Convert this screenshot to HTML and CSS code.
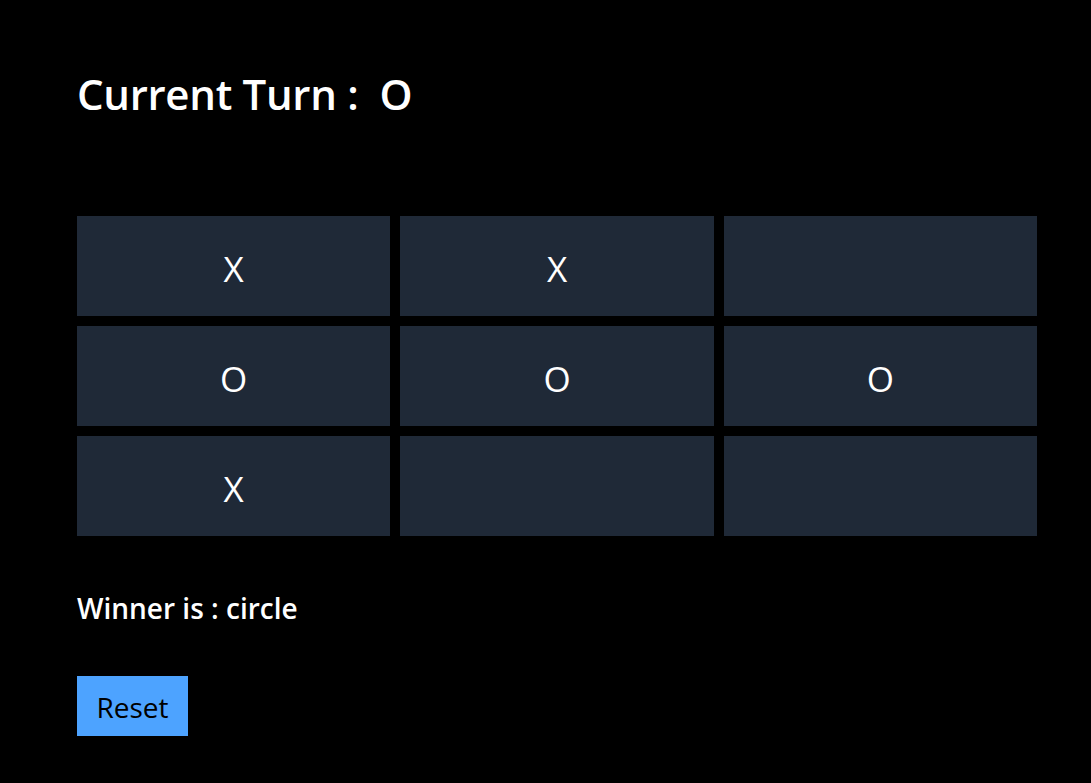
FILE: index.html
```html
<!DOCTYPE html>
<html>
<head>
<meta charset="utf-8">
<link rel="stylesheet" href="styles.css">
</head>
<body>
<main class="game">
  <h1 class="turn">Current Turn :&nbsp; O</h1>
  <div class="board">
    <div class="cell">X</div>
    <div class="cell">X</div>
    <div class="cell"></div>
    <div class="cell">O</div>
    <div class="cell">O</div>
    <div class="cell">O</div>
    <div class="cell">X</div>
    <div class="cell"></div>
    <div class="cell"></div>
  </div>
  <p class="winner">Winner is : circle</p>
  <button class="reset">Reset</button>
</main>
</body>
</html>
```
FILE: styles.css
```css
html, body {
  margin: 0;
  background: #000;
  color: #fff;
  font-family: "Open Sans", "Noto Sans", sans-serif;
}
.game {
  padding: 66px 0 40px 77px;
  width: 960px;
}
.turn {
  margin: 0;
  font-size: 42px;
  font-weight: 600;
  line-height: 56px;
  letter-spacing: -0.3px;
}
.board {
  margin-top: 94px;
  display: grid;
  grid-template-columns: repeat(3, 1fr);
  grid-auto-rows: 100px;
  gap: 10px;
}
.cell {
  background: #1f2937;
  display: flex;
  align-items: center;
  justify-content: center;
  font-size: 35px;
  padding-top: 4px;
  box-sizing: border-box;
}
.winner {
  margin: 52px 0 0;
  font-size: 28px;
  font-weight: 600;
  line-height: 40px;
  letter-spacing: 0;
}
.reset {
  display: block;
  margin-top: 48px;
  background: #4da3ff;
  color: #000;
  border: 0;
  font-family: inherit;
  font-size: 28px;
  padding: 2px 0 0;
  height: 60px;
  width: 111px;
}
```
